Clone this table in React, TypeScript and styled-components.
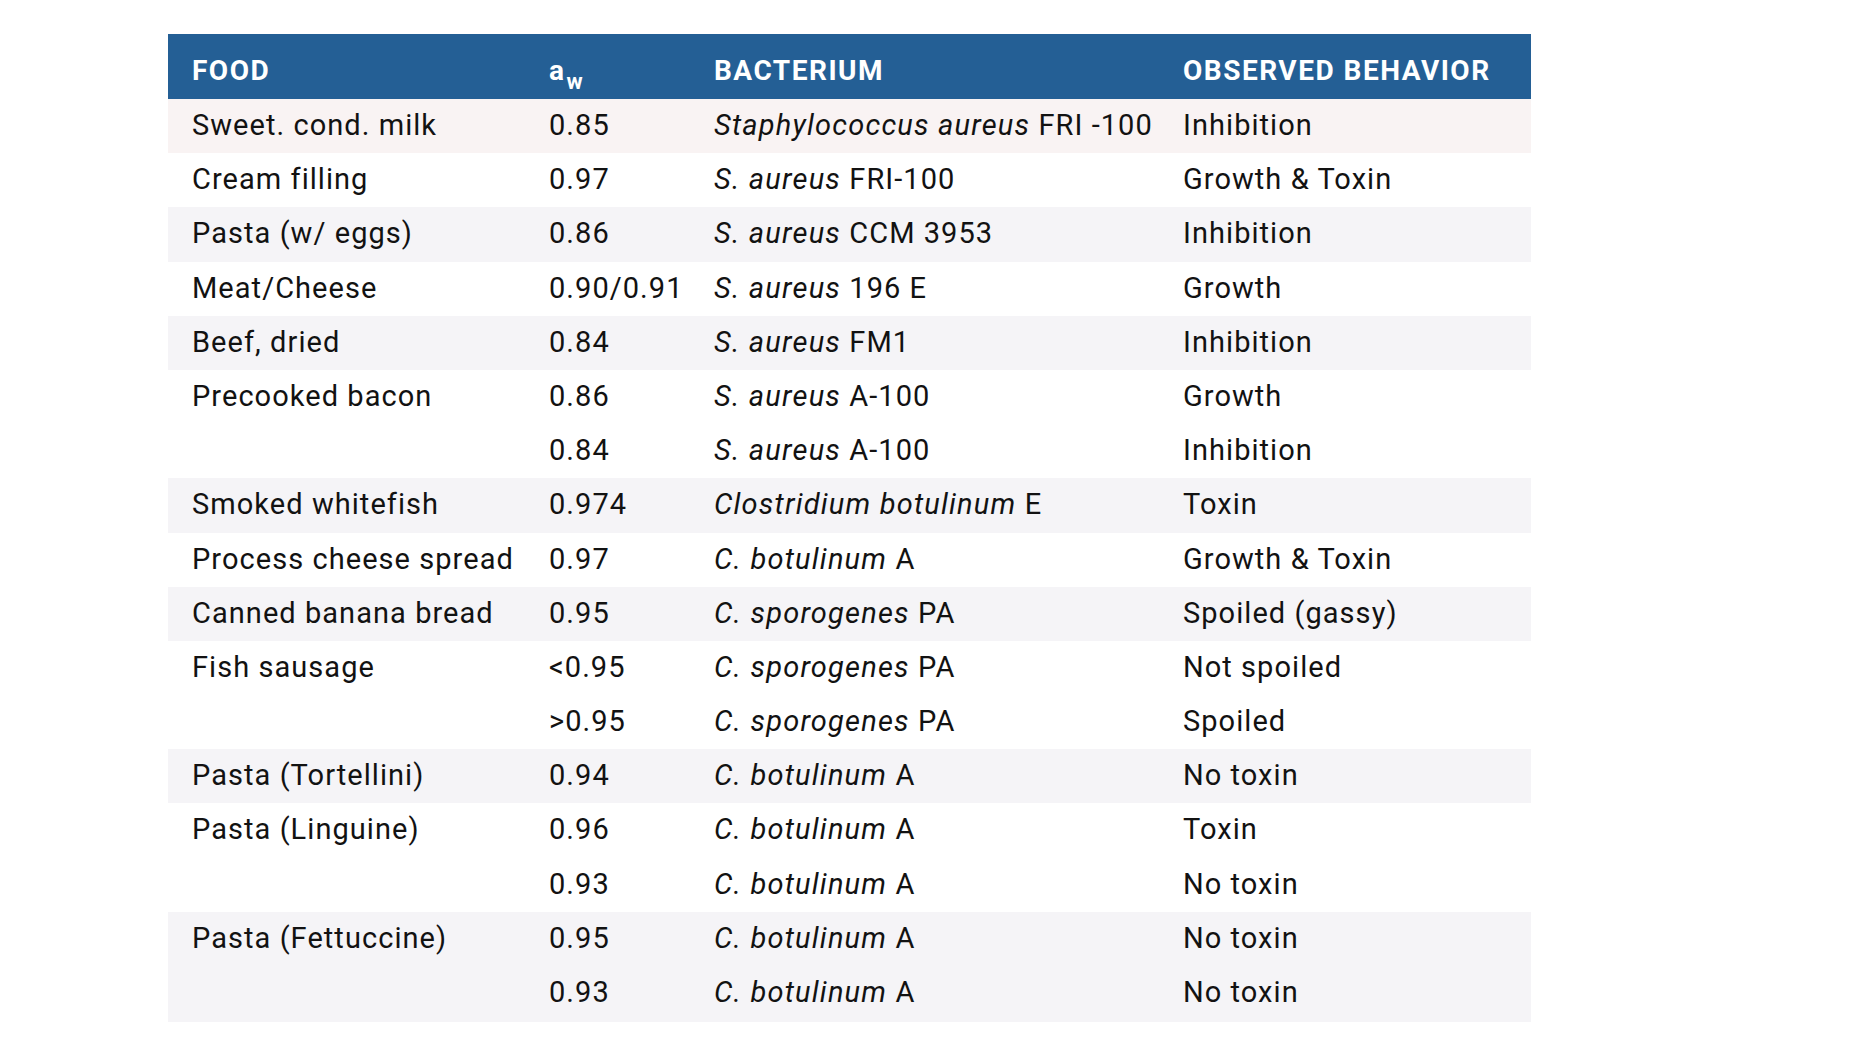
import React from "react";
import styled, { createGlobalStyle } from "styled-components";

const GlobalStyle = createGlobalStyle`
  html, body {
    margin: 0;
    padding: 0;
    background: #ffffff;
  }
  body {
    font-family: Roboto, "Liberation Sans", Arial, sans-serif;
    color: #121212;
  }
`;

const Page = styled.div`
  width: 1872px;
  height: 1052px;
  box-sizing: border-box;
  padding: 34px 0 0 168px;
  background: #ffffff;
  overflow: hidden;
`;

const Table = styled.div`
  width: 1363px;
  display: grid;
  grid-template-columns: 357px 165px 469px 372px;
`;

const HeaderCell = styled.div`
  background: #245f95;
  color: #ffffff;
  height: 65px;
  box-sizing: border-box;
  padding: 8px 0 0 24px;
  font-size: 28px;
  font-weight: 700;
  line-height: 57px;
  letter-spacing: 1.5px;
  white-space: nowrap;
`;

const Sub = styled.span`
  font-size: 22px;
  position: relative;
  top: 9px;
  margin-left: 1px;
  letter-spacing: 0;
`;

const Cell = styled.div<{ $shade: "none" | "pink" | "grey" }>`
  height: 54.2px;
  box-sizing: border-box;
  padding: 0 0 2px 24px;
  font-size: 29px;
  line-height: 52.2px;
  letter-spacing: 1.05px;
  white-space: nowrap;
  background: ${(p) =>
    p.$shade === "pink" ? "#f9f3f3" : p.$shade === "grey" ? "#f5f4f7" : "#ffffff"};
`;

const LastCell = styled(Cell)`
  height: 56px;
`;

const Species = styled.i`
  font-style: italic;
  letter-spacing: 1.2px;
`;

type Row = {
  food: string;
  aw: string;
  genus: string;
  strain: string;
  behavior: string;
  shade: "none" | "pink" | "grey";
};

const rows: Row[] = [
  { food: "Sweet. cond. milk", aw: "0.85", genus: "Staphylococcus aureus", strain: "FRI -100", behavior: "Inhibition", shade: "pink" },
  { food: "Cream filling", aw: "0.97", genus: "S. aureus", strain: "FRI-100", behavior: "Growth & Toxin", shade: "none" },
  { food: "Pasta (w/ eggs)", aw: "0.86", genus: "S. aureus", strain: "CCM 3953", behavior: "Inhibition", shade: "grey" },
  { food: "Meat/Cheese", aw: "0.90/0.91", genus: "S. aureus", strain: "196 E", behavior: "Growth", shade: "none" },
  { food: "Beef, dried", aw: "0.84", genus: "S. aureus", strain: "FM1", behavior: "Inhibition", shade: "grey" },
  { food: "Precooked bacon", aw: "0.86", genus: "S. aureus", strain: "A-100", behavior: "Growth", shade: "none" },
  { food: "", aw: "0.84", genus: "S. aureus", strain: "A-100", behavior: "Inhibition", shade: "none" },
  { food: "Smoked whitefish", aw: "0.974", genus: "Clostridium botulinum", strain: "E", behavior: "Toxin", shade: "grey" },
  { food: "Process cheese spread", aw: "0.97", genus: "C. botulinum", strain: "A", behavior: "Growth & Toxin", shade: "none" },
  { food: "Canned banana bread", aw: "0.95", genus: "C. sporogenes", strain: "PA", behavior: "Spoiled (gassy)", shade: "grey" },
  { food: "Fish sausage", aw: "<0.95", genus: "C. sporogenes", strain: "PA", behavior: "Not spoiled", shade: "none" },
  { food: "", aw: ">0.95", genus: "C. sporogenes", strain: "PA", behavior: "Spoiled", shade: "none" },
  { food: "Pasta (Tortellini)", aw: "0.94", genus: "C. botulinum", strain: "A", behavior: "No toxin", shade: "grey" },
  { food: "Pasta (Linguine)", aw: "0.96", genus: "C. botulinum", strain: "A", behavior: "Toxin", shade: "none" },
  { food: "", aw: "0.93", genus: "C. botulinum", strain: "A", behavior: "No toxin", shade: "none" },
  { food: "Pasta (Fettuccine)", aw: "0.95", genus: "C. botulinum", strain: "A", behavior: "No toxin", shade: "grey" },
  { food: "", aw: "0.93", genus: "C. botulinum", strain: "A", behavior: "No toxin", shade: "grey" },
];

export default function App() {
  return (
    <>
      <GlobalStyle />
      <Page>
        <Table>
          <HeaderCell>FOOD</HeaderCell>
          <HeaderCell>
            a<Sub>w</Sub>
          </HeaderCell>
          <HeaderCell>BACTERIUM</HeaderCell>
          <HeaderCell>OBSERVED BEHAVIOR</HeaderCell>
          {rows.map((r, i) => {
            const C = i === rows.length - 1 ? LastCell : Cell;
            return (
              <React.Fragment key={i}>
                <C $shade={r.shade}>{r.food}</C>
                <C $shade={r.shade}>{r.aw}</C>
                <C $shade={r.shade}>
                  <Species>{r.genus}</Species> {r.strain}
                </C>
                <C $shade={r.shade}>{r.behavior}</C>
              </React.Fragment>
            );
          })}
        </Table>
      </Page>
    </>
  );
}
